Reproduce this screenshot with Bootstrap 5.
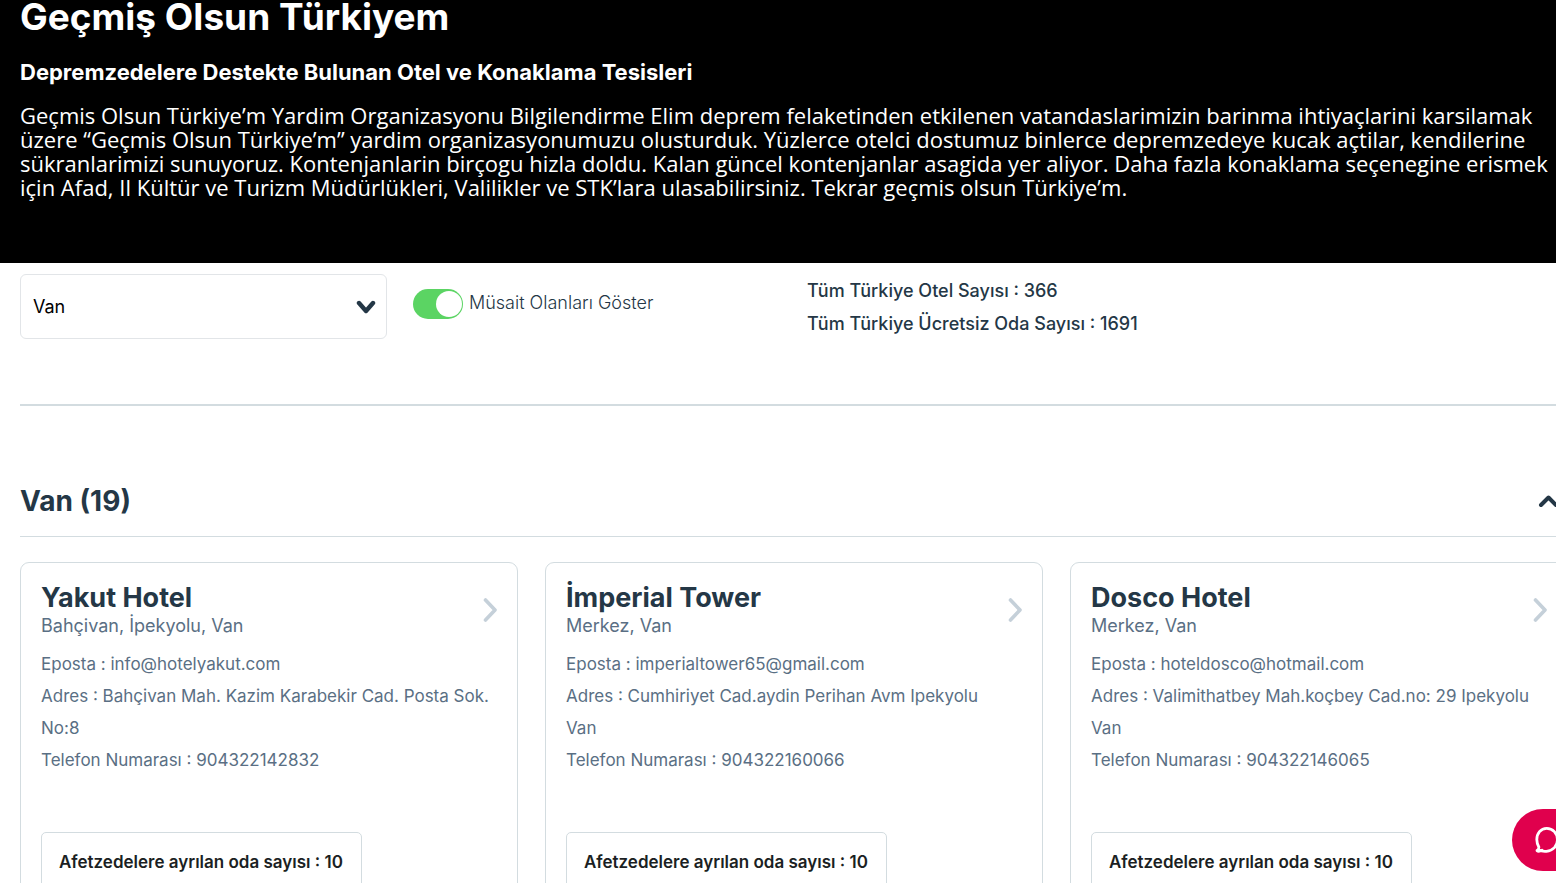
<!DOCTYPE html>
<html lang="tr">
<head>
<meta charset="utf-8">
<meta name="viewport" content="width=device-width, initial-scale=1">
<title>Geçmiş Olsun Türkiyem</title>
<link href="https://cdn.jsdelivr.net/npm/bootstrap@5.3.0/dist/css/bootstrap.min.css" rel="stylesheet">
<style>
  :root { --ink: #243746; --slate: #5a6f84; --line: #d3dce0; }
  body { font-family: Inter, "Liberation Sans", sans-serif; color: var(--ink); background: #fff; overflow-x: hidden; }
  /* content runs slightly past the right edge of the window */
  .wide { margin-left: 20px; margin-right: -12px; }

  .hero { background: #000; color: #fff; padding-bottom: 64px; }
  .hero h1 { font-size: 37px; line-height: 34px; font-weight: 700; margin: 0 0 26px; }
  .hero h2 { font-size: 22px; line-height: 24px; font-weight: 700; margin: 0 0 19px; }
  .hero p { font-family: "Open Sans", sans-serif; font-size: 22px; line-height: 24px; margin: 0; }

  .filters { padding: 11px 0 64px; border-bottom: 2px solid var(--line); }
  .filters .form-select {
    height: 65px; padding: 0 40px 0 12px; font-size: 18px; color: #000;
    border: 1px solid #e2e5e8; border-radius: 6px;
    background-image: url("data:image/svg+xml,%3Csvg xmlns='http://www.w3.org/2000/svg' viewBox='0 0 20 14'%3E%3Cpath d='M3 3l7 8 7-8' fill='none' stroke='%23243746' stroke-width='4.4' stroke-linecap='round' stroke-linejoin='round'/%3E%3C/svg%3E");
    background-size: 20px 14px; background-position: right 10px center;
  }
  .select-col { padding-right: 20px; }
  .switch-col { padding: 15px 0 0 6px; }
  .stats-col { padding-left: 13px; font-size: 18px; line-height: 33px; font-weight: 500; }
  .form-switch { min-height: 30px; }
  .form-switch .form-check-input {
    width: 50px; height: 30px; margin: 0; border: 0; float: none; flex: none;
    background-color: #5bd463; background-size: 26px 26px; background-position: 23px center;
    background-image: url("data:image/svg+xml,%3Csvg xmlns='http://www.w3.org/2000/svg' viewBox='0 0 26 26'%3E%3Ccircle cx='13' cy='13' r='13' fill='%23fff'/%3E%3C/svg%3E");
  }
  .form-switch .form-check-input:checked { background-position: 23px center; }
  .form-switch label { font-size: 18px; line-height: 28px; font-weight: 300; padding-left: 6px; }

  .city { padding: 75px 0 15px; border-bottom: 1px solid var(--line); margin-bottom: 25px; }
  .city h2 { font-size: 28px; line-height: 40px; font-weight: 700; margin: 0; }
  .city button { margin-right: 10px; padding: 0; border: 0; line-height: 0; }

  .hotels { display: grid; grid-template-columns: repeat(3, minmax(0, 1fr)); gap: 27px; }
  .hotel { border: 1px solid var(--line); border-radius: 9px; padding: 20px 20px 24px; }
  .hotel h3 { font-size: 27px; line-height: 30px; font-weight: 700; margin: 0; color: var(--ink); }
  .hotel .place { font-size: 18px; line-height: 26px; color: var(--slate); }
  .hotel .go { padding-top: 14px; line-height: 0; }
  .hotel ul { font-size: 17px; line-height: 32px; min-height: 128px; margin: 9px 0 56px; color: var(--slate); }
  .rooms { display: inline-block; border: 1px solid var(--line); border-radius: 5px; padding: 16px 13px 16px 17px; min-width: 321px; font-size: 17px; line-height: 26px; font-weight: 600; color: #1b1f23; }

  .chat { right: -36px; bottom: 12px; width: 80px; height: 62px; border: 0; background: #e0004d; padding: 0; }
</style>
</head>
<body>
<header class="hero">
  <div class="wide">
    <h1>Geçmiş Olsun Türkiyem</h1>
    <h2>Depremzedelere Destekte Bulunan Otel ve Konaklama Tesisleri</h2>
    <p>Geçmis Olsun Türkiye’m Yardim Organizasyonu Bilgilendirme Elim deprem felaketinden etkilenen vatandaslarimizin barinma ihtiyaçlarini karsilamak<br>
    üzere “Geçmis Olsun Türkiye’m” yardim organizasyonumuzu olusturduk. Yüzlerce otelci dostumuz binlerce depremzedeye kucak açtilar, kendilerine<br>
    sükranlarimizi sunuyoruz. Kontenjanlarin birçogu hizla doldu. Kalan güncel kontenjanlar asagida yer aliyor. Daha fazla konaklama seçenegine erismek<br>
    için Afad, Il Kültür ve Turizm Müdürlükleri, Valilikler ve STK’lara ulasabilirsiniz. Tekrar geçmis olsun Türkiye’m.</p>
  </div>
</header>

<main class="wide">
  <form class="filters row g-0">
    <div class="col-3 select-col">
      <select class="form-select" aria-label="Şehir"><option selected>Van</option></select>
    </div>
    <div class="col-3 switch-col">
      <div class="form-check form-switch d-flex ps-0 mb-0">
        <input class="form-check-input" type="checkbox" role="switch" id="available" checked>
        <label class="form-check-label" for="available">Müsait Olanları Göster</label>
      </div>
    </div>
    <div class="col-6 stats-col">
      <div>Tüm Türkiye Otel Sayısı : 366</div>
      <div>Tüm Türkiye Ücretsiz Oda Sayısı : 1691</div>
    </div>
  </form>

  <section>
    <div class="city d-flex justify-content-between align-items-center">
      <h2>Van (19)</h2>
      <button type="button" class="bg-transparent" aria-label="Daralt">
        <svg width="20" height="14" viewBox="0 0 20 14"><path d="M3 11L10.500 3.500L18 11" fill="none" stroke="#243746" stroke-width="4" stroke-linecap="round" stroke-linejoin="round"/></svg>
      </button>
    </div>

    <div class="hotels">
      <article class="hotel">
        <div class="d-flex justify-content-between">
          <div><h3>Yakut Hotel</h3><div class="place">Bahçivan, İpekyolu, Van</div></div>
          <a class="go" href="#" aria-label="Yakut Hotel"><svg width="14" height="26" viewBox="0 0 14 26"><path d="M2.500 3L12 13 2.500 23" fill="none" stroke="#c5d0d9" stroke-width="3.600" stroke-linecap="round" stroke-linejoin="round"/></svg></a>
        </div>
        <ul class="list-unstyled">
          <li>Eposta : info@hotelyakut.com</li>
          <li>Adres : Bahçivan Mah. Kazim Karabekir Cad. Posta Sok. No:8</li>
          <li>Telefon Numarası : 904322142832</li>
        </ul>
        <div class="rooms">Afetzedelere ayrılan oda sayısı : 10</div>
      </article>

      <article class="hotel">
        <div class="d-flex justify-content-between">
          <div><h3>İmperial Tower</h3><div class="place">Merkez, Van</div></div>
          <a class="go" href="#" aria-label="İmperial Tower"><svg width="14" height="26" viewBox="0 0 14 26"><path d="M2.500 3L12 13 2.500 23" fill="none" stroke="#c5d0d9" stroke-width="3.600" stroke-linecap="round" stroke-linejoin="round"/></svg></a>
        </div>
        <ul class="list-unstyled">
          <li>Eposta : imperialtower65@gmail.com</li>
          <li>Adres : Cumhiriyet Cad.aydin Perihan Avm Ipekyolu<br>Van</li>
          <li>Telefon Numarası : 904322160066</li>
        </ul>
        <div class="rooms">Afetzedelere ayrılan oda sayısı : 10</div>
      </article>

      <article class="hotel">
        <div class="d-flex justify-content-between">
          <div><h3>Dosco Hotel</h3><div class="place">Merkez, Van</div></div>
          <a class="go" href="#" aria-label="Dosco Hotel"><svg width="14" height="26" viewBox="0 0 14 26"><path d="M2.500 3L12 13 2.500 23" fill="none" stroke="#c5d0d9" stroke-width="3.600" stroke-linecap="round" stroke-linejoin="round"/></svg></a>
        </div>
        <ul class="list-unstyled">
          <li>Eposta : hoteldosco@hotmail.com</li>
          <li>Adres : Valimithatbey Mah.koçbey Cad.no: 29 Ipekyolu<br>Van</li>
          <li>Telefon Numarası : 904322146065</li>
        </ul>
        <div class="rooms">Afetzedelere ayrılan oda sayısı : 10</div>
      </article>
    </div>
  </section>
</main>

<button type="button" class="chat position-fixed rounded-pill" aria-label="Canlı destek">
  <svg class="d-block" width="62" height="62" viewBox="0 0 62 62"><path d="M26.500 40.800C29 42.200 31.500 42.600 34.500 42.300c6.500-.7 11-5.300 11-11.500 0-6.500-4.800-11.500-10.800-11.500S24.800 24.300 24.800 30.600c0 2.900.8 5.300 2.100 7.600 0 1.800-.8 2.800-1.900 3.400 1.200 1 3.200.6 5-.5" fill="none" stroke="#fff" stroke-width="2.800" stroke-linecap="round" stroke-linejoin="round"/></svg>
</button>
<script src="https://cdn.jsdelivr.net/npm/bootstrap@5.3.0/dist/js/bootstrap.bundle.min.js"></script>
</body>
</html>
